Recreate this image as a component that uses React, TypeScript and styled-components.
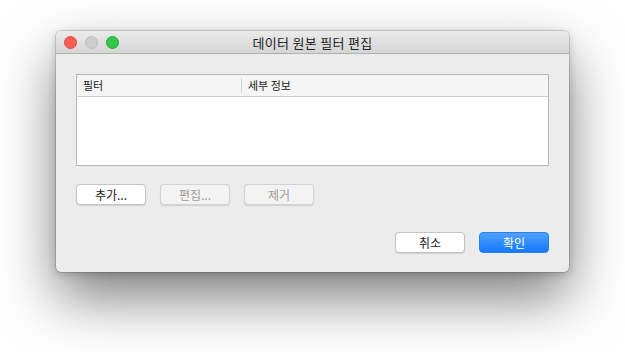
import React from "react";
import styled, { createGlobalStyle } from "styled-components";

const GlobalStyle = createGlobalStyle`
  html, body {
    margin: 0;
    padding: 0;
    background: #ffffff;
  }
  body {
    font-family: "Noto Sans CJK KR", "Noto Sans", sans-serif;
    -webkit-font-smoothing: antialiased;
  }
`;

type LightProps = { $color: string; $border: string };
type ButtonProps = { $disabled?: boolean };

const columns = [
  { title: "필터", width: 165 },
  { title: "세부 정보", width: 0 },
];

const App: React.FunctionComponent = () => {
  return (
    <Stage>
      <GlobalStyle />
      <Window>
        <TitleBar>
          <Lights>
            <Light $color="#fc5f57" $border="#e0443e" />
            <Light $color="#cdcdcd" $border="#bdbdbd" />
            <Light $color="#34c84a" $border="#1fa934" />
          </Lights>
          <Title>데이터 원본 필터 편집</Title>
        </TitleBar>
        <Body>
          <Table>
            <HeaderRow>
              {columns.map((col, i) => (
                <HeaderCell
                  key={col.title}
                  style={col.width ? { width: col.width } : { flex: 1 }}
                  $last={i === columns.length - 1}
                >
                  {col.title}
                </HeaderCell>
              ))}
            </HeaderRow>
            <Rows />
          </Table>
          <ActionRow>
            <PushButton>추가...</PushButton>
            <PushButton $disabled>편집...</PushButton>
            <PushButton $disabled>제거</PushButton>
          </ActionRow>
          <Footer>
            <PushButton>취소</PushButton>
            <DefaultButton>확인</DefaultButton>
          </Footer>
        </Body>
      </Window>
    </Stage>
  );
};

const Stage = styled.div`
  width: 625px;
  height: 352px;
  padding: 31px 0 0 56px;
  box-sizing: border-box;
  overflow: hidden;
`;

const Window = styled.div`
  width: 513px;
  height: 241px;
  background: #ececec;
  border-radius: 5px;
  overflow: hidden;
  box-shadow: 0 0 0 0.5px rgba(0, 0, 0, 0.25), 0 26px 56px rgba(0, 0, 0, 0.5),
    0 2px 8px rgba(0, 0, 0, 0.2);
  display: flex;
  flex-direction: column;
`;

const TitleBar = styled.div`
  position: relative;
  height: 22px;
  flex: none;
  background: linear-gradient(#ebebeb, #d5d5d5);
  border-bottom: 1px solid #b1b1b1;
  display: flex;
  align-items: center;
  justify-content: center;
`;

const Lights = styled.div`
  position: absolute;
  left: 8px;
  top: 5px;
  display: flex;
  gap: 8px;
`;

const Light = styled.span<LightProps>`
  width: 11px;
  height: 11px;
  border-radius: 50%;
  background: ${(p) => p.$color};
  border: 0.5px solid ${(p) => p.$border};
`;

const Title = styled.div`
  font-size: 13px;
  color: #222222;
  letter-spacing: 0.3px;
  padding-top: 1px;
`;

const Body = styled.div`
  flex: 1;
  padding: 20px 20px 0 20px;
  display: flex;
  flex-direction: column;
`;

const Table = styled.div`
  height: 92px;
  background: #ffffff;
  border: 1px solid #b7b7b7;
  box-sizing: border-box;
  display: flex;
  flex-direction: column;
`;

const HeaderRow = styled.div`
  height: 21px;
  flex: none;
  background: #f5f5f5;
  border-bottom: 1px solid #c9c9c9;
  display: flex;
  align-items: center;
`;

const HeaderCell = styled.div<{ $last?: boolean }>`
  height: 15px;
  line-height: 15px;
  font-size: 11px;
  color: #202020;
  padding-left: 6px;
  box-sizing: border-box;
  border-right: ${(p) => (p.$last ? "none" : "1px solid #d4d4d4")};
`;

const Rows = styled.div`
  flex: 1;
`;

const ActionRow = styled.div`
  margin-top: 18px;
  display: flex;
  gap: 14px;
`;

const PushButton = styled.button<ButtonProps>`
  width: 70px;
  height: 21px;
  padding: 0;
  margin: 0;
  font-family: "Noto Sans CJK KR", "Noto Sans", sans-serif;
  font-size: 12px;
  line-height: 19px;
  border-radius: 4px;
  box-sizing: border-box;
  background: ${(p) => (p.$disabled ? "#f3f3f3" : "#ffffff")};
  color: ${(p) => (p.$disabled ? "#9d9d9d" : "#1a1a1a")};
  border: 1px solid ${(p) => (p.$disabled ? "#d2d2d2" : "#c3c3c3")};
  box-shadow: 0 0.5px 1px rgba(0, 0, 0, 0.12);
`;

const Footer = styled.div`
  margin-top: 27px;
  display: flex;
  justify-content: flex-end;
  gap: 14px;
`;

const DefaultButton = styled.button`
  width: 70px;
  height: 21px;
  padding: 0;
  margin: 0;
  font-family: "Noto Sans CJK KR", "Noto Sans", sans-serif;
  font-size: 12px;
  line-height: 19px;
  border-radius: 4px;
  box-sizing: border-box;
  color: #ffffff;
  background: linear-gradient(#4fa2fd, #1579fd);
  border: 1px solid #2d7fe8;
`;

export default App;
